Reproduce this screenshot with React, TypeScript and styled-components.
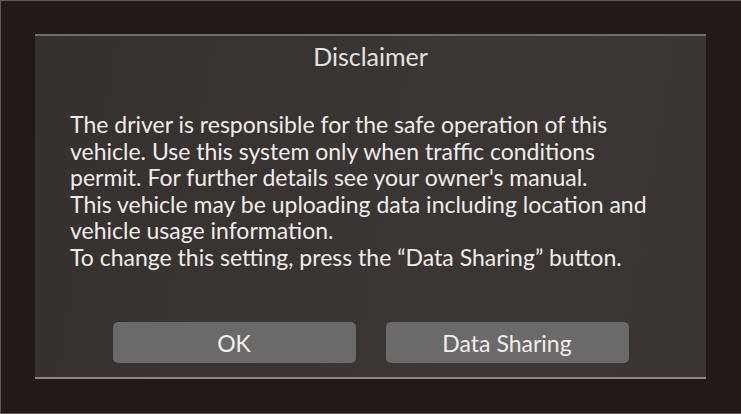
import React from "react";
import styled, { createGlobalStyle } from "styled-components";

const GlobalStyle = createGlobalStyle`
  html, body {
    margin: 0;
    padding: 0;
    background: #231a17;
  }
  body {
    font-family: Lato, "Open Sans", sans-serif;
  }
`;

const Screen = styled.div`
  box-sizing: border-box;
  width: 741px;
  height: 414px;
  background: #231a17;
  border-top: 1px solid #5f5a58;
  border-left: 1px solid #5f5a58;
  border-bottom: 1px solid #5f5a58;
  padding: 33px 34px 0 34px;
`;

const Dialog = styled.div`
  box-sizing: border-box;
  width: 671px;
  height: 345px;
  background: linear-gradient(100deg, #36302e 0%, #3b3633 60%, #3a3532 100%);
  border-top: 2px solid #6e6b69;
  border-bottom: 2px solid #8a8785;
  display: flex;
  flex-direction: column;
  align-items: center;
`;

const Title = styled.div`
  margin-top: 5px;
  font-size: 25px;
  color: #e4e2e0;
  line-height: 30px;
`;

const Body = styled.div`
  align-self: stretch;
  padding: 0 0 0 35px;
  margin-top: 40px;
  font-size: 23px;
  line-height: 26.6px;
  color: #eeeceb;
`;

const Line = styled.div`
  white-space: nowrap;
`;

const Actions = styled.div`
  display: flex;
  gap: 30px;
  margin-top: auto;
  margin-bottom: 14px;
`;

const Button = styled.button`
  width: 243px;
  height: 41px;
  border: none;
  border-radius: 5px;
  background: #6b6a69;
  color: #f0efee;
  font-family: Lato, "Open Sans", sans-serif;
  font-size: 23px;
  padding: 0;
`;

export default function App() {
  return (
    <>
      <GlobalStyle />
      <Screen>
        <Dialog>
          <Title>Disclaimer</Title>
          <Body>
            <Line>The driver is responsible for the safe operation of this</Line>
            <Line>vehicle. Use this system only when traffic conditions</Line>
            <Line>permit. For further details see your owner's manual.</Line>
            <Line>This vehicle may be uploading data including location and</Line>
            <Line>vehicle usage information.</Line>
            <Line>To change this setting, press the “Data Sharing” button.</Line>
          </Body>
          <Actions>
            <Button>OK</Button>
            <Button>Data Sharing</Button>
          </Actions>
        </Dialog>
      </Screen>
    </>
  );
}
